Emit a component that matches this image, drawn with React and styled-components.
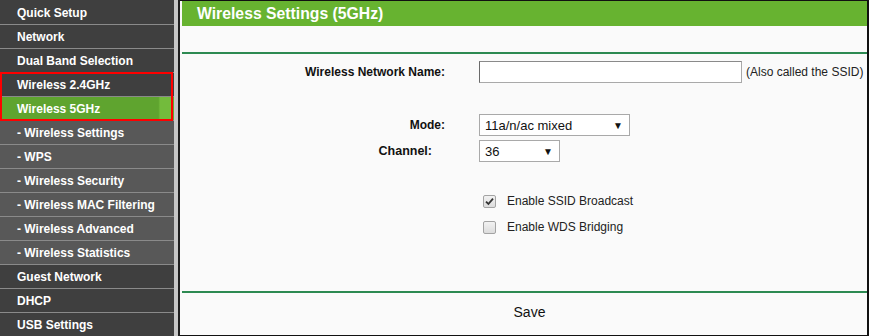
import React from "react"
import styled, { createGlobalStyle } from "styled-components"

const GlobalStyle = createGlobalStyle`
  html, body {
    margin: 0;
    padding: 0;
    background: #fff;
  }
  body {
    font-family: "Liberation Sans", Arial, sans-serif;
  }
`

const Page = styled.div`
  width: 869px;
  height: 336px;
  display: flex;
  overflow: hidden;
  background: #fff;
`

const Sidebar = styled.nav`
  width: 174px;
  flex-shrink: 0;
  display: flex;
  flex-direction: column;
  padding-top: 1px;
  background: #3f3f3f;
`

const Rail = styled.div`
  width: 4px;
  flex-shrink: 0;
  background: #c6c6c6;
  border-right: 2px solid #1e1e1e;
`

const MenuItem = styled.div`
  height: 23px;
  flex-shrink: 0;
  display: flex;
  align-items: center;
  padding-left: 17px;
  border-bottom: 1px solid #8a8a8a;
  color: #fff;
  font-size: 12px;
  font-weight: bold;
  white-space: nowrap;
  background: ${({ $sub, $active }) =>
    $active
      ? "linear-gradient(90deg, #5fa42f 0%, #5fa42f 91%, #73bb3c 92%, #73bb3c 98%, #5fa42f 100%)"
      : $sub
      ? "#585858"
      : "#3f3f3f"};
`

const Highlight = styled.div`
  position: relative;
  display: flex;
  flex-direction: column;
  &::after {
    content: "";
    position: absolute;
    left: 0;
    top: -1px;
    width: 173px;
    height: 49px;
    box-sizing: border-box;
    border: 2px solid #f00;
    pointer-events: none;
  }
`

const Main = styled.main`
  flex: 1;
  display: flex;
  flex-direction: column;
  padding-left: 2px;
  background: #fafafa;
  border-top: 1px solid #111;
  border-right: 2px solid #111;
  border-bottom: 1px solid #111;
  box-sizing: border-box;
  height: 336px;
`

const Header = styled.h1`
  margin: 0;
  height: 25px;
  display: flex;
  align-items: center;
  padding-left: 15px;
  background: #67b330;
  color: #fff;
  font-size: 15.75px;
  font-weight: bold;
`

const Rule = styled.div`
  height: 2px;
  margin-top: ${({ $top }) => $top}px;
  background: #2d8a52;
`

const Form = styled.div`
  display: grid;
  grid-template-columns: 263px auto;
  column-gap: 34px;
  align-items: center;
`

const Label = styled.div`
  text-align: right;
  padding-right: ${({ $inset }) => $inset || 0}px;
  margin-top: ${({ $top }) => $top}px;
  font-size: ${({ $size }) => $size || 12}px;
  font-weight: bold;
  color: #111;
`

const Field = styled.div`
  display: flex;
  align-items: center;
  gap: 4px;
  margin-top: ${({ $top }) => $top}px;
  font-size: 12px;
  color: #222;
`

const TextBox = styled.div`
  width: 261px;
  height: 20px;
  background: #fff;
  border: 1px solid #a9a9a9;
  border-top-color: #8a8a8a;
  border-left-color: #6a6a6a;
`

const Select = styled.div`
  width: ${({ $w }) => $w}px;
  height: 20px;
  box-sizing: content-box;
  display: flex;
  align-items: center;
  justify-content: space-between;
  padding: 0 6px 0 5px;
  background: #fff;
  border: 1px solid #a9a9a9;
  font-size: 13px;
  color: #111;
`

const Arrow = styled.span`
  font-size: 10px;
  color: #111;
`

const CheckRow = styled.label`
  display: flex;
  align-items: center;
  gap: 11px;
  padding-left: 4px;
  height: 20px;
  margin-top: ${({ $top }) => $top}px;
  font-size: 12px;
  color: #222;
`

const Box = styled.span`
  width: 11px;
  height: 11px;
  display: flex;
  align-items: center;
  justify-content: center;
  border: 1px solid #a3a3a3;
  border-radius: 2px;
  background: linear-gradient(#f2f2f2, #dcdcdc);
`

const Footer = styled.div`
  flex: 1;
  display: flex;
  flex-direction: column;
`

const SaveButton = styled.div`
  margin-top: 11px;
  align-self: center;
  font-size: 14px;
  color: #111;
  transform: translateX(5px);
`

const menu = ["Quick Setup", "Network", "Dual Band Selection"]

const subMenu = [
  "Wireless Settings",
  "WPS",
  "Wireless Security",
  "Wireless MAC Filtering",
  "Wireless Advanced",
  "Wireless Statistics",
]

const tail = ["Guest Network", "DHCP", "USB Settings"]

const Check = ({ checked }) => (
  <Box>
    {checked && (
      <svg width="9" height="9" viewBox="0 0 9 9">
        <path d="M1 4.6 L3.4 7 L8 1.6" fill="none" stroke="#333" strokeWidth="1.8" />
      </svg>
    )}
  </Box>
)

const App = () => (
  <>
    <GlobalStyle />
    <Page>
      <Sidebar>
        {menu.map((m) => (
          <MenuItem key={m}>{m}</MenuItem>
        ))}
        <Highlight>
          <MenuItem>Wireless 2.4GHz</MenuItem>
          <MenuItem $active>Wireless 5GHz</MenuItem>
        </Highlight>
        {subMenu.map((s) => (
          <MenuItem key={s} $sub>
            {"- " + s}
          </MenuItem>
        ))}
        {tail.map((t) => (
          <MenuItem key={t}>{t}</MenuItem>
        ))}
      </Sidebar>
      <Rail />
      <Main>
        <Header>Wireless Settings (5GHz)</Header>
        <Rule $top={26} />
        <Form>
          <Label $top={7}>Wireless Network Name:</Label>
          <Field $top={7}>
            <TextBox />
            <span>(Also called the SSID)</span>
          </Field>

          <Label $top={31}>Mode:</Label>
          <Field $top={31}>
            <Select $w={138}>
              <span>11a/n/ac mixed</span>
              <Arrow>▼</Arrow>
            </Select>
          </Field>

          <Label $top={4} $inset={13} $size={12.5}>
            Channel:
          </Label>
          <Field $top={4}>
            <Select $w={68}>
              <span>36</span>
              <Arrow>▼</Arrow>
            </Select>
          </Field>

          <div />
          <CheckRow $top={29}>
            <Check checked />
            Enable SSID Broadcast
          </CheckRow>

          <div />
          <CheckRow $top={6}>
            <Check />
            Enable WDS Bridging
          </CheckRow>
        </Form>
        <Footer>
          <Rule $top={54} />
          <SaveButton>Save</SaveButton>
        </Footer>
      </Main>
    </Page>
  </>
)

export default App
